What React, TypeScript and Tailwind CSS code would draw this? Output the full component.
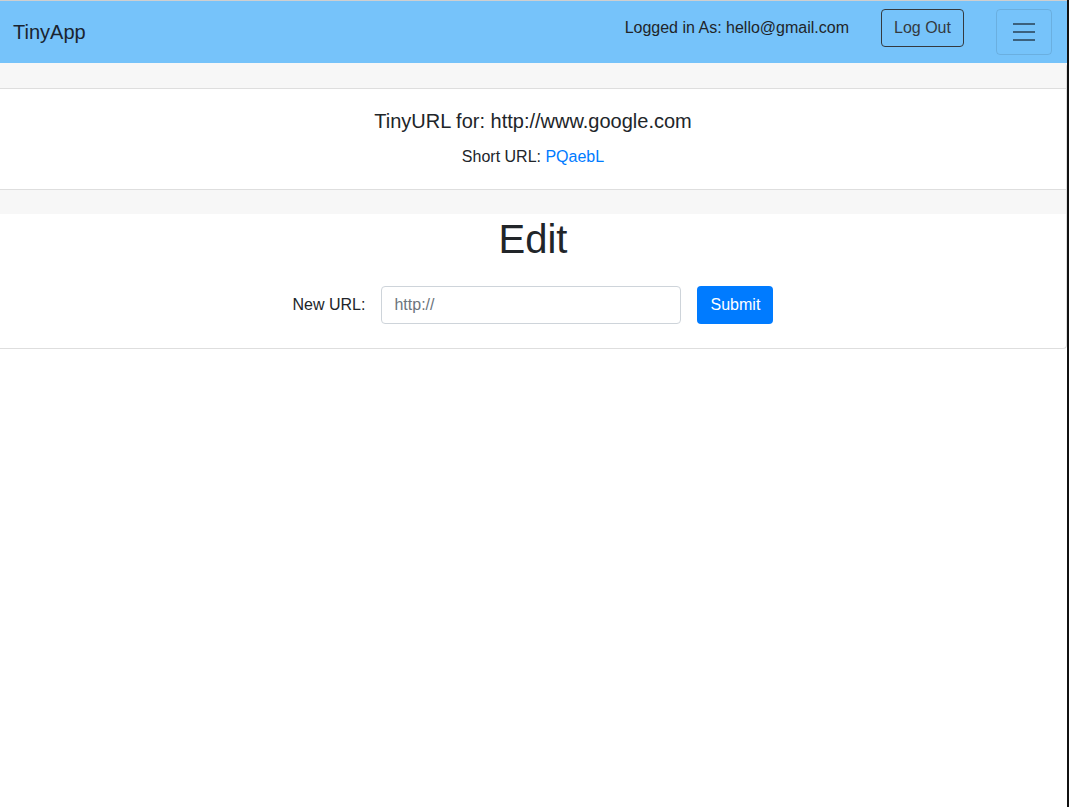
export default function App() {
  return (
    <div className="flex min-h-[807px] w-[1069px] bg-white font-['Liberation_Sans',Arial,sans-serif] text-[#212529]">
      <div className="w-[1067px] border-t border-[#cfcfcf]">
        <nav className="flex h-[62px] items-center bg-[#76c3fa] pl-[13px] pr-[15px]">
          <a className="text-[20px] leading-none text-[#1a2430]">TinyApp</a>
          <div className="ml-auto flex items-center">
            <span className="mb-[8px] text-[16px] text-[#212529]">Logged in As: hello@gmail.com</span>
            <button className="mb-[8px] ml-[32px] h-[38px] w-[83px] rounded-[4px] border border-[#343a40] text-[16px] text-[#343a40]">
              Log Out
            </button>
            <button className="ml-[32px] flex h-[46px] w-[56px] items-center justify-center rounded-[4px] border border-black/10">
              <svg width="30" height="30" viewBox="0 0 30 30">
                <path d="M4 7h22M4 15h22M4 23h22" stroke="rgba(0,0,0,0.5)" strokeWidth="2" />
              </svg>
            </button>
          </div>
        </nav>
        <div className="overflow-hidden rounded-r-[4px] border-r border-b border-[#dedede]">
          <div className="h-[26px] border-b border-[#dedede] bg-[#f7f7f7]" />
          <div className="flex h-[100px] flex-col items-center pt-[20px]">
            <h5 className="text-[20px] leading-[24px]">TinyURL for: http://www.google.com</h5>
            <p className="mt-[12px] text-[16px] leading-[24px]">
              Short URL: <a className="text-[#007bff]">PQaebL</a>
            </p>
          </div>
          <div className="h-[25px] border-t border-[#dedede] bg-[#f7f7f7]" />
          <div className="flex h-[134px] flex-col items-center">
            <h1 className="mt-[1px] text-[40px] leading-[48px]">Edit</h1>
            <form className="mt-[23px] flex items-center">
              <label className="text-[16px]">New URL:</label>
              <input
                placeholder="http://"
                className="ml-[16px] h-[38px] w-[300px] rounded-[4px] border border-[#ced4da] px-[12px] text-[16px] placeholder:text-[#6c757d] outline-none"
              />
              <button
                type="button"
                className="ml-[16px] h-[38px] w-[76px] rounded-[4px] bg-[#007bff] text-[16px] text-white"
              >
                Submit
              </button>
            </form>
          </div>
        </div>
      </div>
      <div className="w-[2px] bg-[#111]" />
    </div>
  );
}
